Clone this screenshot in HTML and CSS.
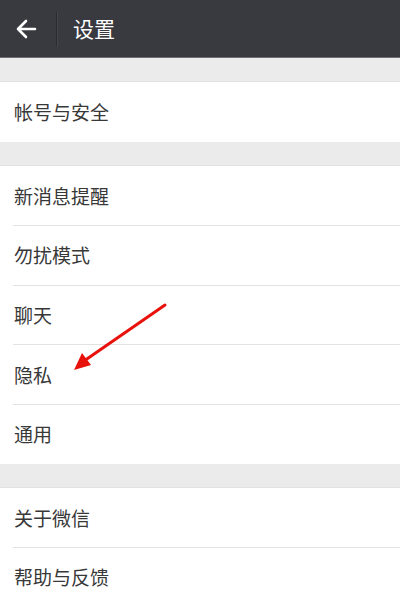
FILE: index.html
```html
<!DOCTYPE html>
<html lang="zh">
<head>
<meta charset="utf-8">
<link rel="stylesheet" href="styles.css">
</head>
<body>
<div class="page">
  <header class="bar">
    <svg class="back" width="22" height="20" viewBox="0 0 22 20">
      <path d="M11 2 L3 10 L11 18 M3 10 H20" fill="none" stroke="#fff" stroke-width="2.6" stroke-linecap="round" stroke-linejoin="round"/>
    </svg>
    <span class="sep"></span>
    <span class="title">设置</span>
  </header>
  <div class="gap"></div>
  <ul class="group">
    <li>帐号与安全</li>
  </ul>
  <div class="gap"></div>
  <ul class="group">
    <li>新消息提醒</li>
    <li>勿扰模式</li>
    <li>聊天</li>
    <li>隐私</li>
    <li>通用</li>
  </ul>
  <div class="gap"></div>
  <ul class="group">
    <li>关于微信</li>
    <li>帮助与反馈</li>
  </ul>
  <svg class="pointer" width="110" height="80" viewBox="0 0 110 80">
    <path d="M103 2 L22 58" stroke="#e8120c" stroke-width="3" stroke-linecap="round" fill="none"/>
    <path d="M12 67 L20 50 L29 62 Z" fill="#e8120c"/>
  </svg>
</div>
</body>
</html>
```
FILE: styles.css
```css
* { box-sizing: border-box; }
html, body { margin: 0; padding: 0; }
body {
  width: 400px;
  height: 600px;
  overflow: hidden;
  background: #ebebeb;
  font-family: "Noto Sans CJK SC", "Noto Sans", sans-serif;
}
.page { position: relative; }
.bar {
  height: 58px;
  background: #393a3f;
  border-bottom: 1px solid #6e6e73;
  display: flex;
  align-items: center;
  padding-left: 15px;
}
.back { display: block; }
.sep {
  width: 1px;
  height: 34px;
  background: #2a2b2f;
  margin-left: 19px;
  box-shadow: 1px 0 0 #45464b;
}
.title {
  color: #fff;
  font-size: 21px;
  margin-left: 16px;
  line-height: 1;
}
.gap {
  height: 24px;
  background: #ebebeb;
  border-bottom: 1px solid #e2e2e2;
}
.group {
  list-style: none;
  margin: 0;
  padding: 0;
  background: #fff;
}
.group li {
  height: 59.6px;
  display: flex;
  align-items: center;
  padding-left: 14px;
  font-size: 19px;
  color: #383838;
  position: relative;
}
.group li + li::before {
  content: "";
  position: absolute;
  left: 13px;
  right: 0;
  top: 0;
  height: 1px;
  background: #e3e3e3;
}
.pointer {
  position: absolute;
  left: 62px;
  top: 303px;
}
```
